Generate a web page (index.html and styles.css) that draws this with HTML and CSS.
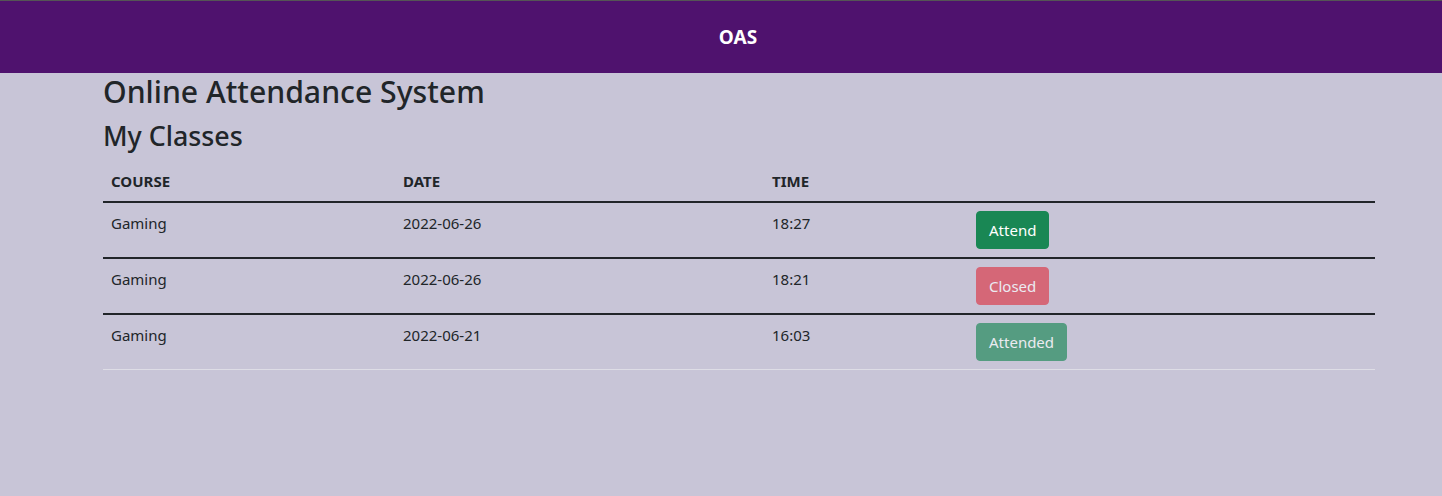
FILE: index.html
```html
<!DOCTYPE html>
<html lang="en">
<head>
<meta charset="utf-8">
<title>OAS</title>
<link rel="stylesheet" href="styles.css">
</head>
<body>
<nav class="navbar"><span class="brand">OAS</span></nav>
<main class="container">
  <h1 class="title">Online Attendance System</h1>
  <h2 class="subtitle">My Classes</h2>
  <table class="classes">
    <thead>
      <tr>
        <th class="c-course">COURSE</th>
        <th class="c-date">DATE</th>
        <th class="c-time">TIME</th>
        <th class="c-action"></th>
      </tr>
    </thead>
    <tbody>
      <tr>
        <td>Gaming</td><td>2022-06-26</td><td>18:27</td>
        <td><button class="btn btn-success">Attend</button></td>
      </tr>
      <tr>
        <td>Gaming</td><td>2022-06-26</td><td>18:21</td>
        <td><button class="btn btn-danger" disabled>Closed</button></td>
      </tr>
      <tr class="last">
        <td>Gaming</td><td>2022-06-21</td><td>16:03</td>
        <td><button class="btn btn-success" disabled>Attended</button></td>
      </tr>
    </tbody>
  </table>
</main>
</body>
</html>
```
FILE: styles.css
```css
* { box-sizing: border-box; }
html, body { margin: 0; padding: 0; }
body {
  background: #c8c5d7;
  color: #212529;
  font-family: "Noto Sans", "Open Sans", sans-serif;
  font-size: 16px;
  line-height: 1.5;
  border-top: 1px solid #555555;
}
.navbar {
  height: 72px;
  background: #4f126e;
  display: flex;
  align-items: center;
  justify-content: center;
}
.brand {
  color: #ffffff;
  font-weight: 700;
  font-size: 19px;
  margin-left: 34px;
}
.container {
  width: 1272px;
  margin-left: 103px;
}
.title {
  margin: 0 0 8px;
  font-size: 30.2px;
  font-weight: 500;
  line-height: 38.4px;
}
.subtitle {
  margin: 0 0 8px;
  font-size: 26.8px;
  font-weight: 500;
  line-height: 33.6px;
}
.classes {
  width: 100%;
  border-collapse: collapse;
}
.classes th, .classes td {
  padding: 8px;
  text-align: left;
  vertical-align: top;
  line-height: 24px;
}
.classes th {
  font-size: 15px;
  font-weight: 700;
  border-bottom: 2px solid #212529;
}
.classes td {
  font-size: 15px;
  border-bottom: 2px solid #212529;
}
.classes tr.last td { border-bottom: 1px solid #dedde6; }
.c-course { width: 292px; }
.c-date { width: 369px; }
.c-time { width: 204px; }
.btn {
  display: inline-block;
  vertical-align: top;
  font-family: inherit;
  font-size: 15px;
  line-height: 24px;
  padding: 6px 12px;
  border: 1px solid transparent;
  border-radius: 4px;
  color: #ffffff;
  cursor: pointer;
}
.btn-success { background: #198754; border-color: #198754; }
.btn-danger { background: #dc3545; border-color: #dc3545; }
.btn:disabled { opacity: 0.65; cursor: default; }
```
